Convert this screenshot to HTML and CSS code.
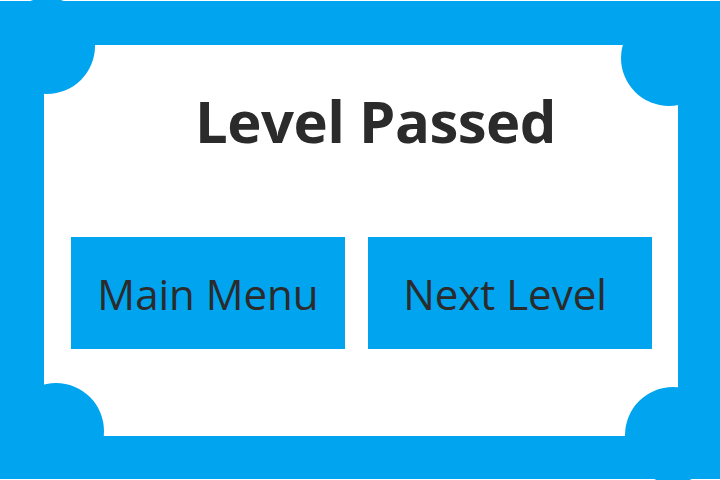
FILE: index.html
```html
<!DOCTYPE html>
<html lang="en">
<head>
<meta charset="utf-8">
<title>Level Passed</title>
<link rel="stylesheet" href="styles.css">
</head>
<body>
<div class="frame">
  <span class="corner corner-tl"></span>
  <span class="corner corner-tr"></span>
  <span class="corner corner-bl"></span>
  <span class="corner corner-br"></span>
  <div class="panel">
    <h1 class="title">Level Passed</h1>
    <div class="actions">
      <button class="btn btn-menu">Main Menu</button>
      <button class="btn btn-next">Next Level</button>
    </div>
  </div>
</div>
</body>
</html>
```
FILE: styles.css
```css
html, body {
  margin: 0;
  padding: 0;
  background: #ffffff;
  width: 720px;
  height: 480px;
  overflow: hidden;
}

body {
  font-family: "Open Sans", "Noto Sans", sans-serif;
  color: #2b2b2b;
}

.frame {
  position: relative;
  margin-top: 1px;
  height: 478px;
  background: #00a4ef;
  padding: 44px 42px 43px 44px;
  box-sizing: border-box;
}

.corner {
  position: absolute;
  width: 96px;
  height: 96px;
  border-radius: 50%;
  background: #00a4ef;
  z-index: 2;
}

.corner-tl { left: -1px; top: -3px; }
.corner-tr { left: 621px; top: 9px; }
.corner-bl { left: 8px; top: 382px; }
.corner-br { left: 625px; top: 386px; }

.panel {
  background: #ffffff;
  height: 100%;
  box-sizing: border-box;
  padding: 46px 26px 0 27px;
  display: flex;
  flex-direction: column;
}

.title {
  margin: 0 0 0 28px;
  font-size: 58px;
  font-weight: 700;
  line-height: 60px;
  text-align: center;
  letter-spacing: -0.5px;
}

.actions {
  margin-top: 86px;
  display: flex;
  gap: 23px;
}

.btn {
  height: 112px;
  border: none;
  background: #00a4ef;
  color: #2b2b2b;
  font-family: "Open Sans", "Noto Sans", sans-serif;
  font-size: 42px;
  font-weight: 400;
  padding: 0;
  display: flex;
  align-items: center;
  justify-content: center;
}

.btn-menu { width: 274px; }
.btn-next { width: 284px; padding-right: 10px; }
```
